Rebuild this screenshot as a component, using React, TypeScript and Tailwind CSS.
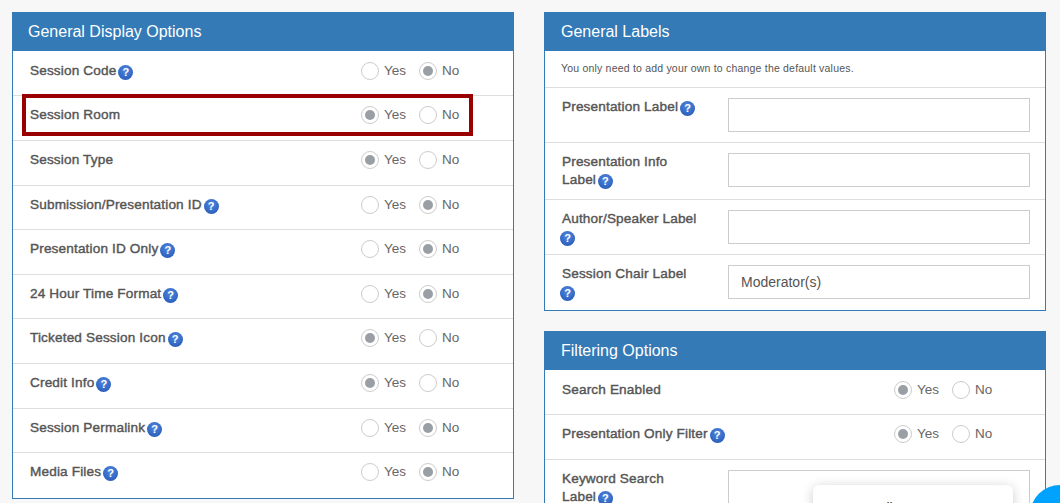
import React from "react";

const Help = () => (
  <span className="inline-flex w-[15px] h-[15px] -my-[4px] -ml-[2px] rounded-full bg-[radial-gradient(circle_at_50%_35%,#5288e0,#1f52b0)] text-white text-[11px] font-bold items-center justify-center align-[-1px] leading-none shrink-0 tracking-normal [-webkit-text-stroke:0px]">
    ?
  </span>
);

const Radio = ({ on, label }: { on: boolean; label: string }) => (
  <span className="flex items-center gap-[5px]">
    <span className="w-[18px] h-[18px] rounded-full border border-[#ccc] bg-white flex items-center justify-center">
      {on && <span className="w-[10px] h-[10px] rounded-full bg-[#9a9fa6]" />}
    </span>
    <span className="text-[13.5px] leading-[18px] text-[#666]">{label}</span>
  </span>
);

const YesNo = ({ yes }: { yes: boolean }) => (
  <div className="flex items-center">
    <div className="w-[58px]">
      <Radio on={yes} label="Yes" />
    </div>
    <Radio on={!yes} label="No" />
  </div>
);

const Label = ({ text, help }: { text: string; help?: boolean }) => (
  <span className="block text-[13.6px] text-[#555] leading-[18px] tracking-[0.15px] [-webkit-text-stroke:0.4px_#555]">
    {text}
    {help && (
      <>
        {" "}
        <Help />
      </>
    )}
  </span>
);

const left: [string, boolean, boolean, string][] = [
  ["Session Code", true, false, "h-[45px] pb-[4px]"],
  ["Session Room", false, true, "h-[45px] pb-[6px]"],
  ["Session Type", false, true, "h-[45px] pb-[6px]"],
  ["Submission/Presentation ID", true, false, "h-[44px] pb-[6px]"],
  ["Presentation ID Only", true, false, "h-[45px] pb-[6px]"],
  ["24 Hour Time Format", true, false, "h-[44px] pb-[6px]"],
  ["Ticketed Session Icon", true, true, "h-[45px] pb-[6px]"],
  ["Credit Info", true, true, "h-[45px] pb-[6px]"],
  ["Session Permalink", true, false, "h-[44px] pb-[6px]"],
  ["Media Files", true, false, "h-[45px] pb-[8px]"],
];

const Header = ({ title, cls }: { title: string; cls: string }) => (
  <div className={`h-[39px] bg-[#337ab7] text-white text-[16px] flex items-center -mx-px -mt-px ${cls}`}>
    {title}
  </div>
);

const labelRows: [string, string, string][] = [
  ["Presentation Label", "h-[55px] pt-[10px]", ""],
  ["Presentation Info Label", "h-[57px] pt-[10px]", ""],
  ["Author/Speaker Label", "h-[55px] pt-[10px]", ""],
  ["Session Chair Label", "h-[55px] pt-[10px]", "Moderator(s)"],
];

const InputRow = ({ label, cls, value, last }: { label: string; cls: string; value?: string; last?: boolean }) => (
  <div className={`flex pl-[17px] ${cls} ${last ? "" : "border-b border-[#ddd]"}`}>
    <div className="w-[166px] pr-[29px]">
      <Label text={label} help />
    </div>
    <div className="w-[302px] h-[34px] border border-[#ccc] bg-white px-[12px] flex items-center text-[14px] text-[#555]">
      {value}
    </div>
  </div>
);

export default function App() {
  return (
    <div className="relative h-[503px] w-[1060px] overflow-hidden bg-[#f7f7f7] font-['Liberation_Sans',Arial,sans-serif]">
      <div className="flex items-start gap-[30px] pl-[12px] pt-[12px]">
        <div className="w-[502px] h-[487px] border border-[#337ab7] bg-white">
          <Header title="General Display Options" cls="pl-[16px]" />
          {left.map(([name, help, yes, h], i) => (
            <div
              key={name}
              className={`flex items-center pl-[17px] ${h} ${i < left.length - 1 ? "border-b border-[#ddd]" : ""}`}
            >
              <div className="w-[331px]">
                <Label text={name} help={help} />
              </div>
              <YesNo yes={yes} />
            </div>
          ))}
        </div>

        <div className="w-[502px] flex flex-col gap-[20px]">
          <div className="border border-[#337ab7] bg-white h-[299px]">
            <Header title="General Labels" cls="pl-[17px]" />
            <div className="h-[37px] border-b border-[#ddd] pl-[16px] pb-[1px] flex items-center text-[10.5px] text-[#555] tracking-[0.2px]">
              You only need to add your own to change the default values.
            </div>
            {labelRows.map(([l, c, v], i) => (
              <InputRow key={l} label={l} cls={c} value={v} last={i === labelRows.length - 1} />
            ))}
          </div>

          <div className="border border-[#337ab7] bg-white h-[200px]">
            <Header title="Filtering Options" cls="pl-[17px]" />
            <div className="flex items-center pl-[17px] pb-[4px] h-[45px] border-b border-[#ddd]">
              <div className="w-[332px]">
                <Label text="Search Enabled" />
              </div>
              <YesNo yes />
            </div>
            <div className="flex items-center pl-[17px] pb-[6px] h-[45px] border-b border-[#ddd]">
              <div className="w-[332px]">
                <Label text="Presentation Only Filter" help />
              </div>
              <YesNo yes />
            </div>
            <InputRow label="Keyword Search Label" cls="pt-[10px]" last />
          </div>
        </div>
      </div>

      {/* red highlight annotation */}
      <div className="absolute left-[22px] top-[94px] w-[451px] h-[42px] border-[4px] border-[#900]" />

      {/* chat widget */}
      <div className="absolute left-[813px] top-[485px] w-[200px] h-[60px] rounded-[6px] bg-white shadow-[0_2px_12px_rgba(0,0,0,0.2)] pl-[15px] pt-[13px] text-[14px] text-[#333]">
        We're Online!
      </div>
      <div className="absolute left-[1030px] top-[485px] w-[60px] h-[60px] rounded-full bg-[#00a2ff]" />
    </div>
  );
}
